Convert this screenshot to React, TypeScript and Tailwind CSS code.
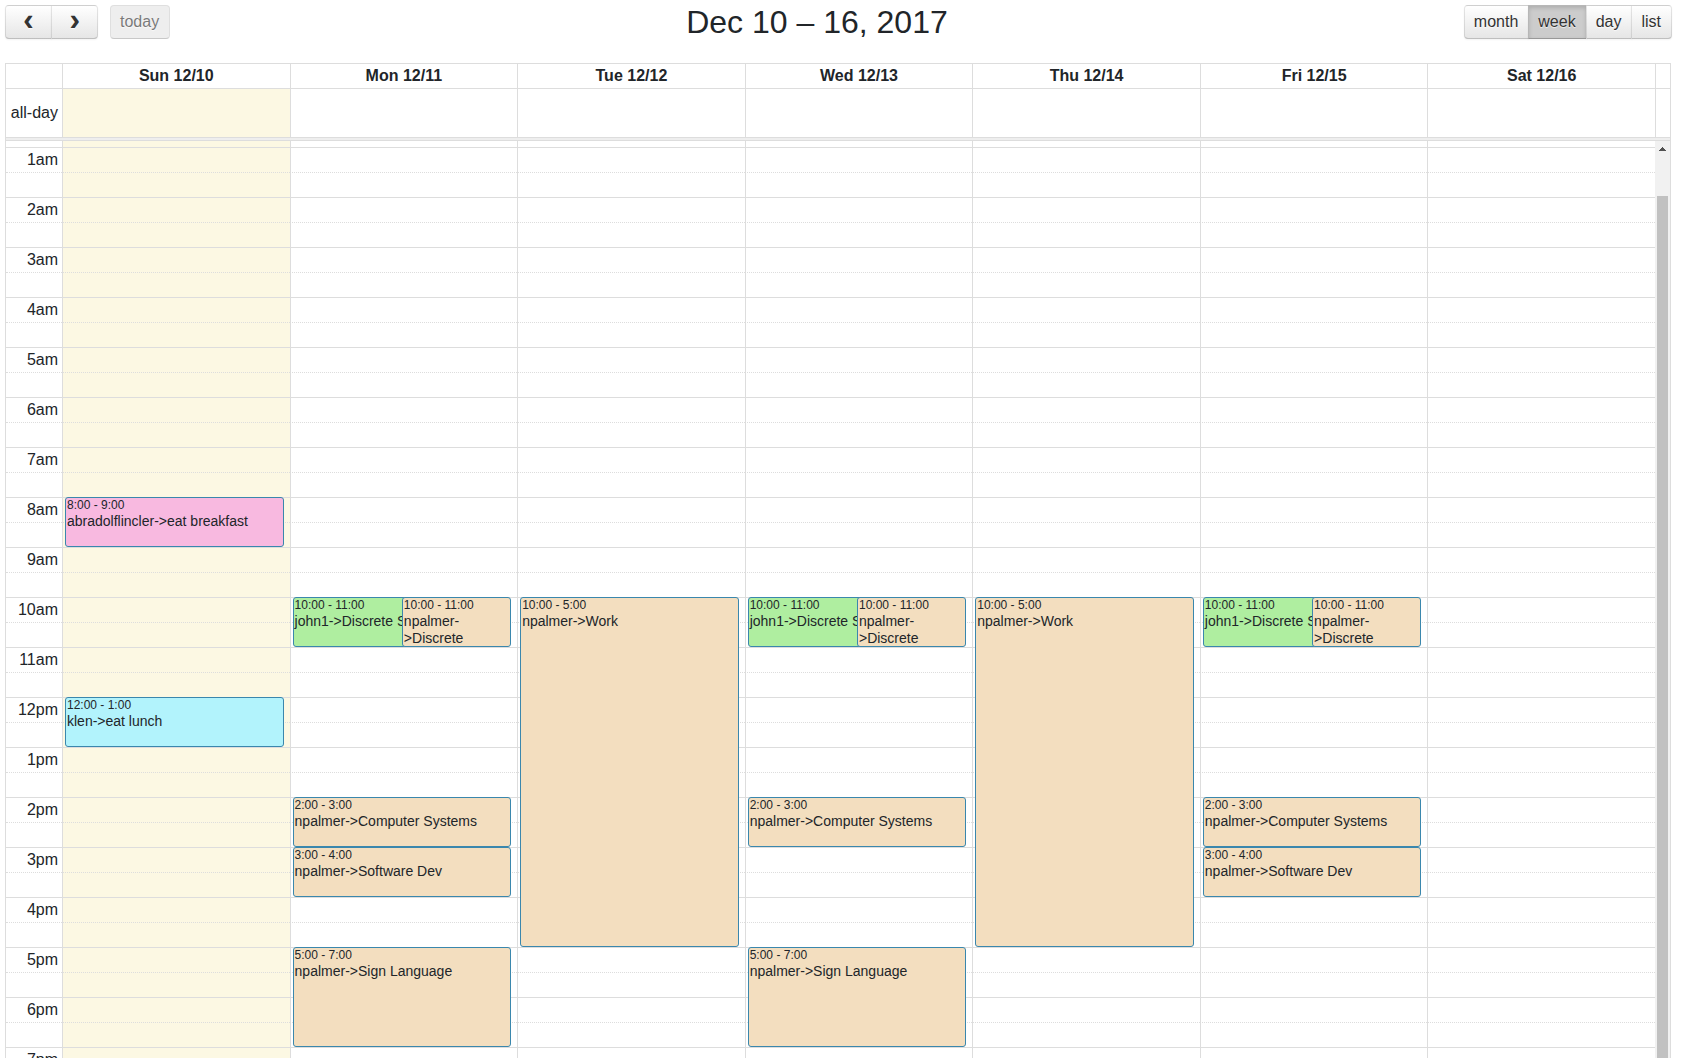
import { useLayoutEffect, useRef, useState } from "react";
import clsx from "clsx";

type CalendarEvent = {
  day: number;
  start: number;
  end: number;
  time: string;
  title: string;
  color: string;
  slot?: "first" | "second";
};

const DAYS = ["Sun 12/10", "Mon 12/11", "Tue 12/12", "Wed 12/13", "Thu 12/14", "Fri 12/15", "Sat 12/16"];
const TODAY = 0;
const VIEWS = ["month", "week", "day", "list"];
const HOUR_HEIGHT = 50;
const INITIAL_SCROLL = 44;

const TAN = "bg-[#f3debf]";
const GREEN = "bg-[#afeea0]";
const PINK = "bg-[#f8b9e0]";
const CYAN = "bg-[#b2f3fc]";

const discrete = (day: number): CalendarEvent[] => [
  { day, start: 10, end: 11, time: "10:00 - 11:00", title: "john1->Discrete Structures", color: GREEN, slot: "first" },
  { day, start: 10, end: 11, time: "10:00 - 11:00", title: "npalmer->Discrete Structures", color: TAN, slot: "second" },
];

const EVENTS: CalendarEvent[] = [
  { day: 0, start: 8, end: 9, time: "8:00 - 9:00", title: "abradolflincler->eat breakfast", color: PINK },
  { day: 0, start: 12, end: 13, time: "12:00 - 1:00", title: "klen->eat lunch", color: CYAN },
  ...discrete(1),
  { day: 1, start: 14, end: 15, time: "2:00 - 3:00", title: "npalmer->Computer Systems", color: TAN },
  { day: 1, start: 15, end: 16, time: "3:00 - 4:00", title: "npalmer->Software Dev", color: TAN },
  { day: 1, start: 17, end: 19, time: "5:00 - 7:00", title: "npalmer->Sign Language", color: TAN },
  { day: 2, start: 10, end: 17, time: "10:00 - 5:00", title: "npalmer->Work", color: TAN },
  ...discrete(3),
  { day: 3, start: 14, end: 15, time: "2:00 - 3:00", title: "npalmer->Computer Systems", color: TAN },
  { day: 3, start: 17, end: 19, time: "5:00 - 7:00", title: "npalmer->Sign Language", color: TAN },
  { day: 4, start: 10, end: 17, time: "10:00 - 5:00", title: "npalmer->Work", color: TAN },
  ...discrete(5),
  { day: 5, start: 14, end: 15, time: "2:00 - 3:00", title: "npalmer->Computer Systems", color: TAN },
  { day: 5, start: 15, end: 16, time: "3:00 - 4:00", title: "npalmer->Software Dev", color: TAN },
];

const HOURS = Array.from({ length: 24 }, (_, h) => h);

function hourLabel(h: number) {
  return `${h % 12 === 0 ? 12 : h % 12}${h < 12 ? "am" : "pm"}`;
}

const BUTTON =
  "h-[34px] cursor-pointer border border-black/10 border-b-black/25 text-[#333] [text-shadow:0_1px_1px_rgba(255,255,255,0.75)]";
const RAISED =
  "bg-[#f5f5f5] bg-linear-to-b from-white to-[#e6e6e6] shadow-[inset_0_1px_0_rgba(255,255,255,0.2),0_1px_2px_rgba(0,0,0,0.05)]";
const PRESSED = "bg-[#ccc] shadow-[inset_0_2px_4px_rgba(0,0,0,0.15),0_1px_2px_rgba(0,0,0,0.05)]";

function Toolbar() {
  const [view, setView] = useState("week");
  return (
    <header className="mb-6 flex items-start">
      <div className="flex">
        <button
          aria-label="Previous week"
          className={clsx(BUTTON, RAISED, "flex w-[47px] items-center justify-center rounded-l-[4px]")}
        >
          <span className="font-['Liberation_Mono',monospace] text-[32px] leading-[30px] font-bold">‹</span>
        </button>
        <button
          aria-label="Next week"
          className={clsx(BUTTON, RAISED, "-ml-px flex w-[47px] items-center justify-center rounded-r-[4px]")}
        >
          <span className="font-['Liberation_Mono',monospace] text-[32px] leading-[30px] font-bold">›</span>
        </button>
        <button
          disabled
          className={clsx(BUTTON, "ml-3 cursor-default rounded-[4px] bg-[#e6e6e6] pr-[10px] pl-[9px] opacity-65")}
        >
          today
        </button>
      </div>
      <h2 className="flex-1 text-center text-[32px] leading-[34px]">Dec 10 – 16, 2017</h2>
      <div className="flex">
        {VIEWS.map((v, i) => (
          <button
            key={v}
            aria-pressed={v === view}
            onClick={() => setView(v)}
            className={clsx(
              BUTTON,
              v === view ? PRESSED : RAISED,
              "pr-[10px] pl-[9px]",
              i === 0 ? "rounded-l-[4px]" : "-ml-px",
              i === VIEWS.length - 1 && "rounded-r-[4px]",
            )}
          >
            {v}
          </button>
        ))}
      </div>
    </header>
  );
}

function EventCard({ event }: { event: CalendarEvent }) {
  return (
    <a
      href="#"
      className={clsx(
        "absolute -top-px overflow-hidden rounded-[3px] border border-[#3a87ad] pl-px",
        event.color,
        event.slot === "first" && "right-[20%] left-[2px] z-10",
        event.slot === "second" && "right-[6px] left-[calc(50%-2px)] z-20",
        !event.slot && "right-[6px] left-[2px] z-10",
      )}
      style={{ height: (event.end - event.start) * HOUR_HEIGHT }}
    >
      <div className="text-[12px] leading-[15px] whitespace-nowrap">{event.time}</div>
      <div className="text-[14px] leading-[17px]">{event.title}</div>
    </a>
  );
}

function Columns({ gutter }: { gutter?: boolean }) {
  return (
    <colgroup>
      <col className="w-[56px]" />
      {DAYS.map((d) => (
        <col key={d} />
      ))}
      {gutter && <col className="w-[15px]" />}
    </colgroup>
  );
}

function DayHeader() {
  return (
    <table className="w-full table-fixed border-separate border-spacing-0">
      <Columns gutter />
      <thead>
        <tr className="h-6">
          <td />
          {DAYS.map((d) => (
            <th key={d} scope="col" className="border-l border-[#ddd] p-0 text-center font-bold">
              {d}
            </th>
          ))}
          <td className="border-l border-[#ddd]" />
        </tr>
      </thead>
      <tbody>
        <tr className="h-[49px]">
          <th scope="row" className="border-t border-[#ddd] p-0 pr-1 text-right font-normal whitespace-nowrap">
            all-day
          </th>
          {DAYS.map((d, i) => (
            <td key={d} className={clsx("border-t border-l border-[#ddd]", i === TODAY && "bg-[#fcf8e3]")} />
          ))}
          <td className="border-t border-l border-[#ddd]" />
        </tr>
      </tbody>
    </table>
  );
}

function TimeGrid() {
  const scroller = useRef<HTMLDivElement>(null);
  useLayoutEffect(() => {
    if (scroller.current) scroller.current.scrollTop = INITIAL_SCROLL;
  }, []);

  return (
    <div className="flex min-h-0 flex-1">
      <div ref={scroller} className="min-w-0 flex-1 overflow-y-auto [scrollbar-width:none]">
        <table className="w-full table-fixed border-separate border-spacing-0">
          <Columns />
          {HOURS.map((h) => (
            <tbody key={h}>
              <tr className="h-[25px]">
                <th scope="row" className="border-t border-[#ddd] p-0 pr-1 text-right font-normal">
                  {hourLabel(h)}
                </th>
                {DAYS.map((d, i) => (
                  <td
                    key={d}
                    className={clsx("relative border-t border-l border-[#ddd] p-0", i === TODAY && "bg-[#fcf8e3]")}
                  >
                    {EVENTS.filter((e) => e.day === i && e.start === h).map((e) => (
                      <EventCard key={e.title} event={e} />
                    ))}
                  </td>
                ))}
              </tr>
              <tr className="h-[25px]">
                <td className="border-t border-dotted border-[#ddd]" />
                {DAYS.map((d, i) => (
                  <td
                    key={d}
                    className={clsx(
                      "border-t border-l border-[#ddd] [border-top-style:dotted]",
                      i === TODAY && "bg-[#fcf8e3]",
                    )}
                  />
                ))}
              </tr>
            </tbody>
          ))}
        </table>
      </div>
      <div className="flex w-[15px] flex-col bg-[#f1f1f1]" aria-hidden="true">
        <svg className="mt-[6px] ml-1 h-1 w-[7px]" viewBox="0 0 7 4" shapeRendering="crispEdges">
          <path d="M3 0h1v1h1v1h1v1h1v1H0V3h1V2h1V1h1z" fill="#505050" />
        </svg>
        <div className="mt-[45px] ml-[2px] w-[11px] flex-1 bg-[#c1c1c1]" />
      </div>
    </div>
  );
}

export default function App() {
  return (
    <main className="flex h-screen flex-col overflow-hidden bg-white pt-[5px] pr-[10px] pl-[5px] font-['Liberation_Sans',Arial,sans-serif] text-[16px] leading-6 text-[#212529]">
      <Toolbar />
      <section aria-label="Week" className="mr-px flex min-h-0 flex-1 flex-col border border-b-0 border-[#ddd]">
        <DayHeader />
        <div className="h-1 shrink-0 border-y border-[#ddd] bg-[#eee]" />
        <TimeGrid />
      </section>
    </main>
  );
}
